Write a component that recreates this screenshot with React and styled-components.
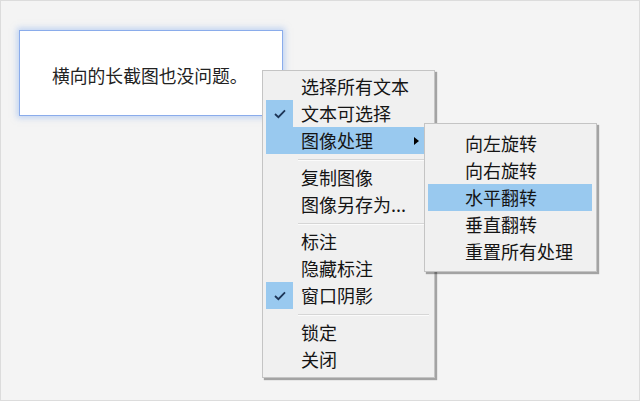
import React from "react";
import styled, { createGlobalStyle } from "styled-components";

const Global = createGlobalStyle`
  html, body { margin: 0; padding: 0; background: #f4f4f4; }
  * { box-sizing: border-box; }
  body { font-family: "Noto Sans CJK SC", "Noto Sans", sans-serif; }
`;

const Frame = styled.div`
  position: relative;
  width: 640px;
  height: 401px;
  border: 1px solid #dcdcdc;
  background: #f4f4f4;
  padding: 29px 0 0 18px;
`;

const Card = styled.div`
  width: 264px;
  height: 86px;
  background: #ffffff;
  border: 1px solid #8aaceb;
  box-shadow: 0 0 6px 2px rgba(140, 178, 240, 0.5);
  display: flex;
  align-items: center;
  padding: 4px 0 0 32px;
  font-size: 17.8px;
  color: #222;
`;

const Menu = styled.div`
  position: absolute;
  left: ${(p) => p.$left}px;
  top: ${(p) => p.$top}px;
  width: 173px;
  background: #f0f0f0;
  border: 1px solid #c4c4c4;
  box-shadow: 2px 2px 1px rgba(0, 0, 0, 0.33);
  padding: ${(p) => p.$pad};
  z-index: ${(p) => p.$z || 1};
`;

const Item = styled.div`
  position: relative;
  height: 27px;
  display: flex;
  align-items: center;
  font-size: 18px;
  line-height: 27px;
  color: #151515;
  white-space: nowrap;
  padding-left: ${(p) => p.$indent}px;
  background: ${(p) => (p.$active ? "#99c9ef" : "transparent")};
`;

const CheckCell = styled.span`
  position: absolute;
  left: 0;
  top: 0;
  width: 27px;
  height: 27px;
  background: #99c9ef;
  display: flex;
  align-items: center;
  justify-content: center;
`;

const Arrow = styled.span`
  position: absolute;
  right: 12px;
  top: 50%;
  margin-top: -4px;
  width: 0;
  height: 0;
  border-left: 5px solid #000;
  border-top: 4px solid transparent;
  border-bottom: 4px solid transparent;
`;

const Separator = styled.div`
  height: 10px;
  display: flex;
  align-items: center;
  padding: 0 2px 0 32px;
  &::after {
    content: "";
    flex: 1;
    height: 1px;
    background: #d6d6d6;
    box-shadow: 0 1px 0 #fbfbfb;
  }
`;

const Check = () => (
  <svg width="12" height="10" viewBox="0 0 12 10">
    <path d="M1 5 L4.4 8.2 L11 1.4" fill="none" stroke="#1d3557" strokeWidth="1.8" />
  </svg>
);

const MenuRow = ({ label, checked, active, children, indent = 35 }) => (
  <Item $active={active} $indent={indent}>
    {checked && (
      <CheckCell>
        <Check />
      </CheckCell>
    )}
    {label}
    {children}
  </Item>
);

export default function App() {
  return (
    <>
      <Global />
      <Frame>
        <Card>横向的长截图也没问题。</Card>
        <Menu $left={261} $top={69} $pad="2px 3px 4px 3px">
          <MenuRow label="选择所有文本" />
          <MenuRow label="文本可选择" checked />
          <MenuRow label="图像处理" active>
            <Arrow />
            <Menu $left={158} $top={-4} $pad="6px 4px 6px 3px" $z={2}>
              <MenuRow label="向左旋转" indent={37} />
              <MenuRow label="向右旋转" indent={37} />
              <MenuRow label="水平翻转" indent={37} active />
              <MenuRow label="垂直翻转" indent={37} />
              <MenuRow label="重置所有处理" indent={37} />
            </Menu>
          </MenuRow>
          <Separator />
          <MenuRow label="复制图像" />
          <MenuRow label="图像另存为..." />
          <Separator />
          <MenuRow label="标注" />
          <MenuRow label="隐藏标注" />
          <MenuRow label="窗口阴影" checked />
          <Separator />
          <MenuRow label="锁定" />
          <MenuRow label="关闭" />
        </Menu>
      </Frame>
    </>
  );
}
